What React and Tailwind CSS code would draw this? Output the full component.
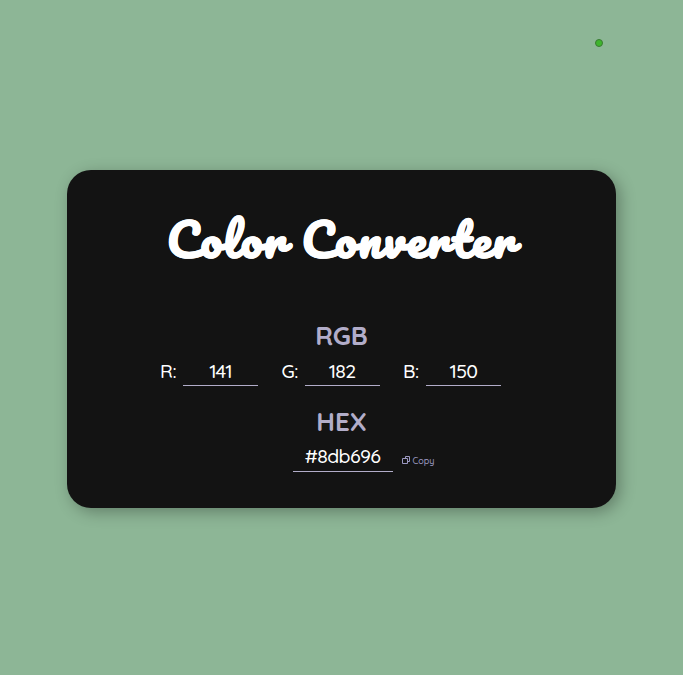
const channels = [
  { label: 'R:', value: '141' },
  { label: 'G:', value: '182' },
  { label: 'B:', value: '150' },
];

function Channel({ label, value }) {
  return (
    <div className="flex h-[29px] items-end">
      <span className="w-[23px] pb-[3px] text-[19px] font-[470] leading-6 tracking-[-0.4px]">{label}</span>
      <span className="h-[29px] w-[75px] border-b border-[#b2adc9] pt-[2px] text-center text-[19.5px] font-[470] leading-6 tracking-[-0.7px]">
        {value}
      </span>
    </div>
  );
}

function CopyIcon() {
  return (
    <svg width="9" height="9" viewBox="0 0 9 9" fill="none" stroke="currentColor" strokeWidth="1">
      <path d="M3.5 2.5v-2h4v5h-2" />
      <path d="M.5 2.5h5v5h-5z" />
    </svg>
  );
}

export default function App() {
  return (
    <main className="relative flex h-[675px] w-full flex-col items-center bg-[#8db696] pt-[170px] font-['Quicksand','Lato',sans-serif] text-white">
      <span className="absolute left-[595px] top-[39px] size-2 rounded-full border border-[#397b32] bg-[#3fb52d]" />
      <section className="flex h-[338px] w-[549px] flex-col items-center rounded-[24px] bg-[#131313] shadow-[4px_4px_16px_rgba(0,0,0,0.3)]">
        <h1 className="mt-[36px] h-[66px] scale-x-[1.05] whitespace-nowrap font-['Pacifico','Lato',cursive] text-[45px] font-bold leading-[66px] tracking-[1.7px] [-webkit-text-stroke:0.3px_white]">
          Color Converter
        </h1>
        <h2 className="mt-[48px] h-8 text-[26px] font-bold leading-8 text-[#b2adc9]">RGB</h2>
        <div className="mt-[5px] mr-[22px] flex h-[29px] gap-[23.5px]">
          {channels.map((channel) => (
            <Channel key={channel.label} {...channel} />
          ))}
        </div>
        <h2 className="mt-[20px] h-8 text-[26px] font-bold leading-8 text-[#b2adc9]">HEX</h2>
        <div className="ml-[44px] mt-[5px] flex h-[29px] w-[142px]">
          <span className="w-[100px] shrink-0 border-b border-[#b2adc9] pt-px text-center text-[19.5px] font-[470] leading-6 tracking-[-0.6px]">
            #8db696
          </span>
          <button className="ml-[9px] mt-[11px] flex h-3 items-center gap-[2px] text-[9px] font-medium leading-3 text-[#9c99c2]">
            <CopyIcon />
            <span className="pt-px">Copy</span>
          </button>
        </div>
      </section>
    </main>
  );
}
